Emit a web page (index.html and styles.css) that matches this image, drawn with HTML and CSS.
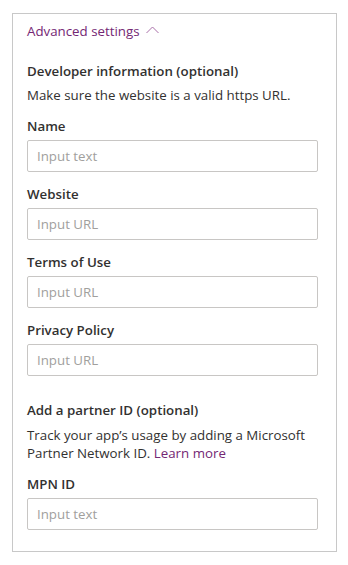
FILE: index.html
```html
<!DOCTYPE html>
<html lang="en">
<head>
  <meta charset="UTF-8">
  <meta name="viewport" content="width=device-width, initial-scale=1.0">
  <title>Advanced settings</title>
  <link rel="stylesheet" href="styles.css">
</head>
<body>
  <div class="panel">
    <div class="toggle">
      Advanced settings
      <svg class="chevron" width="13" height="8" viewBox="0 0 13 8">
        <polyline points="0.5,7 6.5,1 12.5,7" fill="none" stroke="#a86ea8" stroke-width="1"/>
      </svg>
    </div>

    <div class="section-title">Developer information (optional)</div>
    <p class="desc">Make sure the website is a valid https URL.</p>

    <div class="field">
      <label class="label">Name</label>
      <input class="input" type="text" placeholder="Input text">
    </div>
    <div class="field">
      <label class="label">Website</label>
      <input class="input" type="text" placeholder="Input URL">
    </div>
    <div class="field">
      <label class="label">Terms of Use</label>
      <input class="input" type="text" placeholder="Input URL">
    </div>
    <div class="field">
      <label class="label">Privacy Policy</label>
      <input class="input" type="text" placeholder="Input URL">
    </div>

    <div class="section-title partner">Add a partner ID (optional)</div>
    <div class="desc desc-partner">
      <span class="line">Track your app’s usage by adding a Microsoft</span>
      <span class="line"><span>Partner Network ID.</span> <a href="#" class="link">Learn more</a></span>
    </div>

    <div class="field">
      <label class="label">MPN ID</label>
      <input class="input" type="text" placeholder="Input text">
    </div>
  </div>
</body>
</html>
```

FILE: styles.css
```css
body {
  font-family: 'Segoe UI', 'Open Sans', sans-serif;
  font-size: 13.3px;
  margin: 13px 0 0 12px;
  background-color: white;
  color: #323130;
}
.panel {
  width: 325px;
  box-sizing: border-box;
  border: 1px solid #c8c8c8;
  padding: 7px 18px 21px 14px;
}
.toggle {
  display: flex;
  align-items: center;
  gap: 6px;
  height: 20px;
  line-height: 20px;
  color: #742774;
  margin-bottom: 20px;
}
.chevron {
  margin-top: -3px;
}
.section-title {
  font-weight: 600;
  line-height: 20px;
}
.section-title.partner {
  margin-top: 24px;
}
.desc {
  margin: 5px 0 11px;
  line-height: 19px;
}
.desc-partner {
  margin: 6px 0 12px;
  line-height: 18px;
}
.desc-partner .line {
  display: block;
}
.link {
  color: #742774;
  text-decoration: none;
}
.field {
  margin-bottom: 12px;
}
.field:last-child {
  margin-bottom: 0;
}
.label {
  display: block;
  font-weight: 600;
  line-height: 20px;
  margin-bottom: 4px;
}
.input {
  display: block;
  width: 100%;
  height: 32px;
  box-sizing: border-box;
  border: 1px solid #c8c6c4;
  border-radius: 2px;
  padding: 0 9px;
  font-family: inherit;
  font-size: 13.3px;
  color: #323130;
  outline: none;
}
.input::placeholder {
  color: #a19f9d;
}
```
